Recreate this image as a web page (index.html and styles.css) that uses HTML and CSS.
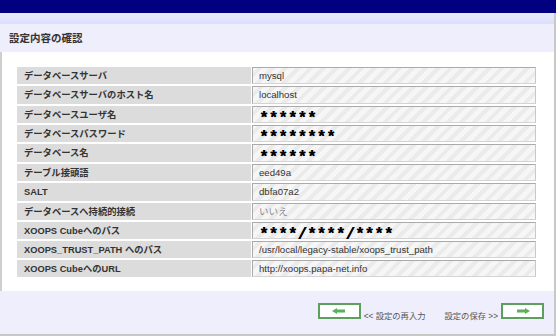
FILE: index.html
```html
<!DOCTYPE html>
<html lang="ja">
<head>
  <meta charset="UTF-8" />
  <title>設定内容の確認</title>
  <link rel="stylesheet" href="styles.css">
</head>
<body>
  <div class="topbar"></div>
  <div class="frame">
    <div class="band"></div>
    <h1 class="title">設定内容の確認</h1>
    <main class="content">
      <table class="conf">
        <tr><th>データベースサーバ</th><td>mysql</td></tr>
        <tr class="tall"><th>データベースサーバのホスト名</th><td>localhost</td></tr>
        <tr><th>データベースユーザ名</th><td class="mask">******</td></tr>
        <tr><th>データベースパスワード</th><td class="mask">********</td></tr>
        <tr class="tall"><th>データベース名</th><td class="mask">******</td></tr>
        <tr><th>テーブル接頭語</th><td>eed49a</td></tr>
        <tr class="tall"><th>SALT</th><td>dbfa07a2</td></tr>
        <tr><th>データベースへ持続的接続</th><td class="dim">いいえ</td></tr>
        <tr><th>XOOPS Cubeへのパス</th><td class="mask">****/****/****</td></tr>
        <tr><th>XOOPS_TRUST_PATH へのパス</th><td>/usr/local/legacy-stable/xoops_trust_path</td></tr>
        <tr><th>XOOPS CubeへのURL</th><td>http://xoops.papa-net.info</td></tr>
      </table>
    </main>
    <footer class="nav">
      <button class="arrow">
        <svg width="14" height="6" viewBox="0 0 14 6"><polygon points="0,3 5,0 5,1.5 13,1.5 13,4.5 5,4.5 5,6" fill="#5bb05b"/></svg>
      </button>
      <span class="lbl">&lt;&lt; 設定の再入力</span>
      <span class="lbl next">設定の保存 &gt;&gt;</span>
      <button class="arrow">
        <svg width="14" height="6" viewBox="0 0 14 6"><polygon points="14,3 9,0 9,1.5 1,1.5 1,4.5 9,4.5 9,6" fill="#5bb05b"/></svg>
      </button>
    </footer>
  </div>
</body>
</html>
```
FILE: styles.css
```css
* {margin: 0; padding: 0; box-sizing: border-box;}
body {
  font-family: "Liberation Sans", "Noto Sans CJK JP", sans-serif;
  background: #fff;
  color: #333;
  width: 556px;
  height: 336px;
  overflow: hidden;
}
.topbar {
  height: 13px;
  background: #000080;
}
.frame {
  border-right: 2px solid #c8c8c8;
}
.band {
  height: 11px;
  background: linear-gradient(#e8eafc, #dcdffb);
}
.title {
  height: 28px;
  background: #eeeefc;
  font-size: 10.5px;
  font-weight: bold;
  line-height: 28px;
  padding-left: 9px;
  color: #333;
}
.content {
  border-left: 2px solid #cfcfcf;
  padding: 13px 0 0 15px;
  height: 239px;
}
table.conf {
  width: 521px;
  border-collapse: separate;
  border-spacing: 1px 2px;
  margin-left: -1px;
}
.conf th, .conf td {
  height: 17px;
  line-height: 12px;
}
.conf tr.tall th, .conf tr.tall td {
  height: 18px;
}
.conf th {
  width: 234px;
  background: #dcdcdc;
  text-align: left;
  font-size: 9.3px;
  font-weight: bold;
  padding: 0 0 0 7px;
  color: #333;
}
.conf td {
  padding: 0 0 0 6px;
  font-size: 9.6px;
  color: #333;
  border: 1px solid #aaa;
  border-right-color: #c8c8c8;
  border-bottom-color: #d4d4d4;
  background: repeating-linear-gradient(-45deg, #f6f6f6 0 5px, #ebebeb 5px 9px);
  white-space: nowrap;
}
.conf td.mask {
  font-family: "Liberation Mono", monospace;
  font-size: 16px;
  font-weight: bold;
  color: #000;
  line-height: 6px;
  padding-top: 9px;
  text-shadow: 0.4px 0 0 #000;
}
.conf td.dim {
  color: #888;
}
.nav {
  height: 45px;
  background: #eeeefc;
  border-bottom: 2px solid #c8c8c8;
  display: flex;
  align-items: flex-start;
  justify-content: flex-end;
  padding: 12px 10px 0 0;
}
.arrow {
  flex: none;
  width: 43px;
  height: 16px;
  background: #fff;
  border: 2px solid #5e9e5e;
  display: flex;
  align-items: center;
  justify-content: center;
}
.lbl {
  font-size: 8.3px;
  color: #555;
  margin-top: 6px;
  padding-left: 3px;
  white-space: nowrap;
}
.lbl.next {
  margin-left: 19px;
  padding: 0 3px 0 0;
}
```
